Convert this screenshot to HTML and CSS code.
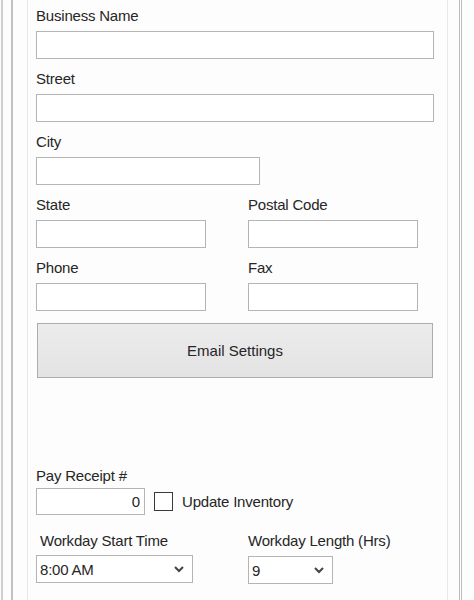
FILE: index.html
```html
<!DOCTYPE html>
<html lang="en">
<head>
    <meta charset="UTF-8">
    <meta name="viewport" content="width=device-width, initial-scale=1.0">
    <title>Business Settings</title>
    <link rel="stylesheet" href="styles.css">
</head>
<body>

    <div class="outer">
        <div class="group">
            <div class="panel">

                <div class="field">
                    <label for="businessName">Business Name</label>
                    <input type="text" id="businessName" class="wide">
                </div>

                <div class="field">
                    <label for="street">Street</label>
                    <input type="text" id="street" class="wide">
                </div>

                <div class="field">
                    <label for="city">City</label>
                    <input type="text" id="city" class="city">
                </div>

                <div class="pair">
                    <div class="field">
                        <label for="state">State</label>
                        <input type="text" id="state" class="half">
                    </div>
                    <div class="field">
                        <label for="postal">Postal Code</label>
                        <input type="text" id="postal" class="half">
                    </div>
                </div>

                <div class="pair">
                    <div class="field">
                        <label for="phone">Phone</label>
                        <input type="text" id="phone" class="half">
                    </div>
                    <div class="field">
                        <label for="fax">Fax</label>
                        <input type="text" id="fax" class="half">
                    </div>
                </div>

                <button class="email-btn">Email Settings</button>

                <div class="receipt">
                    <label for="receipt">Pay Receipt #</label>
                    <div class="receipt-row">
                        <input type="text" id="receipt" class="number" value="0">
                        <span class="check"></span>
                        <span class="check-text">Update Inventory</span>
                    </div>
                </div>

                <div class="pair workday">
                    <div class="field">
                        <label class="indent">Workday Start Time</label>
                        <div class="combo start">
                            <span>8:00 AM</span>
                            <svg width="12" height="8" viewBox="0 0 12 8"><path d="M2 2 L6 6 L10 2" fill="none" stroke="#444" stroke-width="2"/></svg>
                        </div>
                    </div>
                    <div class="field">
                        <label>Workday Length (Hrs)</label>
                        <div class="combo length">
                            <span>9</span>
                            <svg width="12" height="8" viewBox="0 0 12 8"><path d="M2 2 L6 6 L10 2" fill="none" stroke="#444" stroke-width="2"/></svg>
                        </div>
                    </div>
                </div>

            </div>
        </div>
    </div>

</body>
</html>
```

FILE: styles.css
```css
body {
    margin: 0;
    font-family: "Liberation Sans", Arial, sans-serif;
    font-size: 15px;
    letter-spacing: -0.2px;
    color: #262626;
    background-color: #fdfdfd;
    overflow: hidden;
}
.outer {
    height: 600px;
    margin-left: 1px;
    border-left: 2px solid #cfcfcf;
    display: flex;
}
.group {
    margin-left: 8px;
    width: 446px;
    border-left: 2px solid #c2c2c2;
    border-right: 3px double #bdbdbd;
    display: flex;
}
.panel {
    margin-left: 14px;
    width: 411px;
    border-left: 1px solid #e8e8e8;
    border-right: 1px solid #e8e8e8;
    padding: 7px 0 0 8px;
}
label {
    display: block;
    line-height: 18px;
    margin-bottom: 6px;
}
.field {
    margin-bottom: 11px;
}
input {
    display: block;
    box-sizing: border-box;
    height: 28px;
    border: 1px solid #b4b4b4;
    background-color: #fff;
    font: inherit;
    padding: 0 4px;
    margin: 0;
}
.wide {
    width: 398px;
}
.city {
    width: 224px;
}
.half {
    width: 170px;
}
.pair {
    display: grid;
    grid-template-columns: 212px 1fr;
}
.email-btn {
    display: block;
    width: 396px;
    height: 55px;
    margin: 1px 0 0 1px;
    border: 1px solid #adadad;
    background-color: #e6e6e6;
    background-image: linear-gradient(#ececec, #e3e3e3);
    font: inherit;
    color: #262626;
}
.receipt {
    margin-top: 89px;
}
.receipt label {
    margin-bottom: 3px;
}
.receipt-row {
    display: flex;
    align-items: center;
}
.number {
    width: 109px;
    height: 27px;
    text-align: right;
    color: #262626;
}
.check {
    width: 17px;
    height: 17px;
    border: 1px solid #3a3a3a;
    background-color: #fff;
    margin-left: 9px;
}
.check-text {
    margin-left: 9px;
}
.workday {
    margin-top: 17px;
}
.indent {
    padding-left: 4px;
    margin-bottom: 5px;
}
.combo {
    box-sizing: border-box;
    height: 28px;
    border: 1px solid #b4b4b4;
    background-color: #fff;
    display: flex;
    align-items: center;
    justify-content: space-between;
    padding: 0 7px 0 3px;
}
.combo svg {
    display: block;
}
.start {
    width: 157px;
}
.length {
    width: 85px;
}
```
